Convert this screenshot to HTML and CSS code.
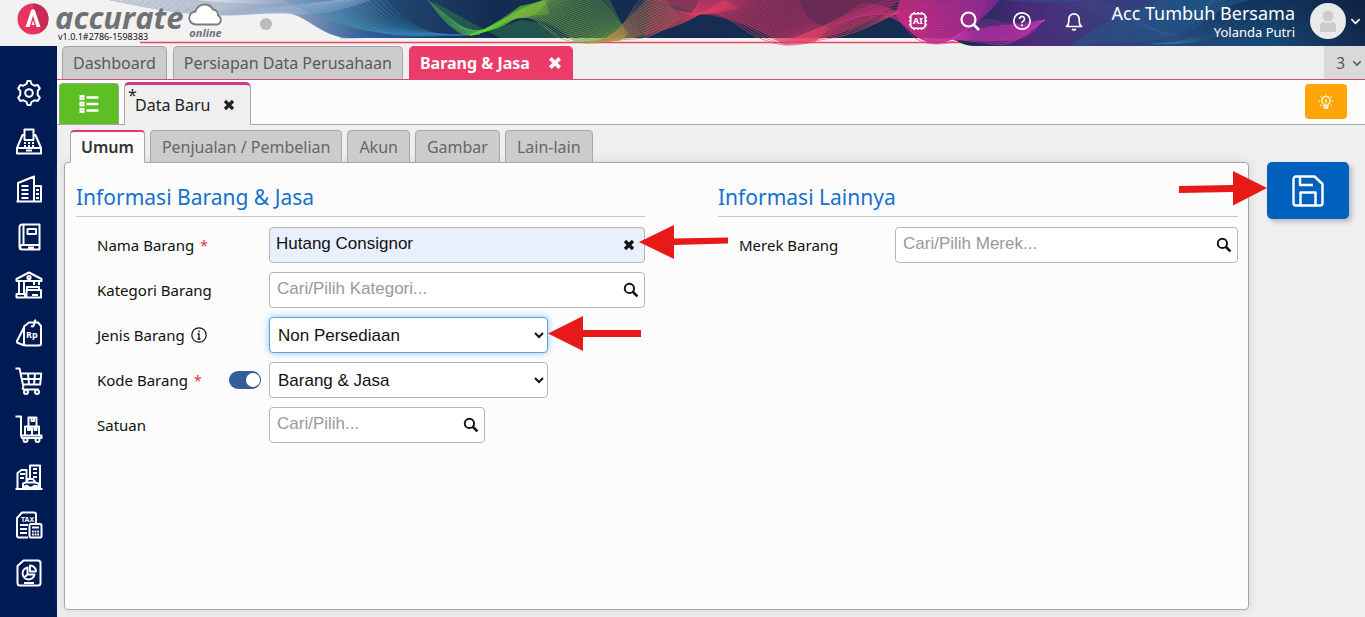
FILE: index.html
```html
<!DOCTYPE html>
<html lang="id">
<head>
<meta charset="utf-8">
<title>Accurate Online - Barang &amp; Jasa</title>
<link rel="stylesheet" href="styles.css">
</head>
<body>
<svg class="sprite" aria-hidden="true">
  <symbol id="i-x" viewBox="0 0 12 12"><path d="M2 2l8 8M10 2l-8 8" fill="none" stroke="currentColor" stroke-width="3.2"/></symbol>
  <symbol id="i-search" viewBox="0 0 20 20"><circle cx="8" cy="8" r="5.8" fill="none" stroke="currentColor" stroke-width="2.4"/><path d="M12.2 12.2L18 18" stroke="currentColor" stroke-width="3.2"/></symbol>
  <symbol id="i-down" viewBox="0 0 12 12"><path d="M1.500 4l4.500 4.500L10.500 4" fill="none" stroke="currentColor" stroke-width="1.800"/></symbol>
</svg>

<header class="header">
  <svg class="banner" viewBox="0 0 1365 46" preserveAspectRatio="none" aria-hidden="true">
    <defs>
      <linearGradient id="navy" x1="0" x2="1365" y1="0" y2="0" gradientUnits="userSpaceOnUse">
        <stop offset=".09" stop-color="#f0f0f0"/><stop offset=".16" stop-color="#d5dbe4"/>
        <stop offset=".21" stop-color="#8fa3c4"/><stop offset=".25" stop-color="#4f74a5"/>
        <stop offset=".29" stop-color="#1f4670"/><stop offset=".36" stop-color="#152c52"/>
        <stop offset=".7" stop-color="#152d50"/><stop offset=".75" stop-color="#4b2878"/>
        <stop offset=".8" stop-color="#3d3a7a"/><stop offset=".86" stop-color="#27467c"/>
        <stop offset=".93" stop-color="#174a78"/><stop offset="1" stop-color="#14294f"/>
      </linearGradient>
      <linearGradient id="fuchsia" x1="0" x2="1"><stop offset="0" stop-color="#d32a80"/><stop offset="1" stop-color="#7b2a9c"/></linearGradient>
      <linearGradient id="shade" x1="0" x2="0" y1="0" y2="1"><stop offset="0" stop-color="#0b1838" stop-opacity=".45"/><stop offset="1" stop-color="#0b1838" stop-opacity="0"/></linearGradient>
    </defs>
    <path d="M140 42.500H966" stroke="#e8455f" stroke-width="1.300"/>
    <path d="M110 0C150 8 190 17 226 15C250 13 262 12 280 12C306 12 320 38 350 38H950C960 42 964 46 974 46H1365V0Z" fill="url(#navy)"/>
    <path d="M430 0Q452 34 472 35Q490 32 520 20Q545 20 560 38L500 38Z" fill="#2f7a48" opacity=".5"/>
    <path d="M472 35Q495 25 520 6L548 0Q535 20 518 18Q500 24 472 35Z" fill="#5cc330" opacity=".7"/>
    <path d="M520 18Q545 16 575 42Q600 46 625 30L610 0H548Z" fill="#4c8a3a" opacity=".4"/>
    <path d="M600 42Q630 20 645 0H700L700 14Q670 34 600 42Z" fill="#8c5a50" opacity=".5"/>
    <path d="M650 0L700 14Q740 18 785 45Q860 36 900 0Z" fill="#b02a5c" opacity=".55"/>
    <path d="M895 14Q915 43 937 44Q965 40 1000 0H900Z" fill="url(#fuchsia)" opacity=".85"/>
    <path d="M950 38Q985 22 1040 24Q1030 42 1000 41Q970 42 950 38Z" fill="#a42a9c" opacity=".75"/>
    <path d="M1000 0Q1060 6 1080 0H1000ZM1140 42Q1190 40 1215 0H1160Q1100 20 1070 46Z" fill="#1b6b91" opacity=".3"/>
    <path d="M1180 46Q1210 8 1250 0H1365V46Z" fill="url(#shade)"/>
    <g id="waves" fill="none" stroke-width=".8"></g>
  </svg>
  <div class="brand">
    <svg class="brand-mark" viewBox="0 0 32 32" aria-hidden="true"><circle cx="16" cy="16" r="15.500" fill="#ea3360"/><path d="M16 .5A15.500 15.500 0 0 1 31.500 16A15.500 15.500 0 0 1 22 30L24 24L16 6Z" fill="#c72a55"/><path d="M8.500 24L14 7.500q2-3 4 0L23.500 24h-4L16 12.500L12.500 24Z" fill="#fff"/><path d="M14.500 22L16 17.500l1.500 4.500Z" fill="#fff"/></svg>
    <div class="brand-text"><span class="brand-name">accurate</span><span class="version">v1.0.1#2786-1598383</span></div>
    <div class="brand-cloud">
      <svg viewBox="0 0 36 24" aria-hidden="true"><path d="M8 21.500a6.500 6.500 0 0 1-.5-13A9.500 9.500 0 0 1 25 6.500a5.500 5.500 0 0 1 5 6a4.700 4.700 0 0 1-1.500 9Z" fill="#fff" stroke="#777b7e" stroke-width="1.800"/></svg>
      <span>online</span>
    </div>
    <span class="status-dot"></span>
  </div>
  <nav class="header-tools" aria-label="Alat">
    <button class="tool" aria-label="AI"><svg viewBox="0 0 22 22"><rect x="3" y="3" width="16" height="16" rx="3.500" fill="none" stroke="#fff" stroke-width="1.800"/><path d="M7 1v2M11 1v2M15 1v2M7 19v2M11 19v2M15 19v2M1 7h2M1 11h2M1 15h2M19 7h2M19 11h2M19 15h2" stroke="#fff" stroke-width="1.800"/><text x="11" y="14.500" text-anchor="middle" class="ai-text">AI</text></svg></button>
    <button class="tool" aria-label="Cari"><svg viewBox="0 0 20 20"><circle cx="8.500" cy="8.500" r="7" fill="none" stroke="#fff" stroke-width="2.200"/><path d="M13.500 13.500l5.500 5.500" stroke="#fff" stroke-width="2.600"/></svg></button>
    <button class="tool" aria-label="Bantuan"><svg viewBox="0 0 20 20" fill="none" stroke="#fff"><circle cx="10" cy="10" r="8.200" stroke-width="1.700"/><path d="M7.500 8a2.500 2.500 0 1 1 3.800 2.100c-.9.500-1.300.9-1.300 1.900" stroke-width="1.700"/><path d="M10 13.400v1.900" stroke-width="1.900"/></svg></button>
    <button class="tool" aria-label="Notifikasi"><svg viewBox="0 0 20 20" fill="none" stroke="#fff" stroke-width="1.700" stroke-linejoin="round"><path d="M2.500 15.500h15c-1.900-1.500-2.300-3-2.300-5V8a5.200 5.200 0 0 0-10.400 0v2.500c0 2-.4 3.500-2.300 5Z"/><path d="M8 18.300q2 1.200 4 0"/></svg></button>
  </nav>
  <div class="account"><span class="company">Acc Tumbuh Bersama</span><span class="user">Yolanda Putri</span></div>
  <button class="avatar" aria-label="Akun pengguna">
    <svg class="avatar-pic" viewBox="0 0 36 36"><circle cx="18" cy="18" r="18" fill="#e9eaeb"/><circle cx="18" cy="13" r="5.500" fill="#ccc"/><path d="M10 28v-5q0-4 4-4q4 2.500 8 0q4 0 4 4v5q0 1-1 1H11q-1 0-1-1Z" fill="#ccc"/></svg>
    <svg class="avatar-caret"><use href="#i-down"/></svg>
  </button>
</header>

<div class="shell">
  <nav class="sidebar" aria-label="Menu utama">
    <a href="#" aria-label="Pengaturan"><svg viewBox="0 0 28 28"><path d="M11.500 5l1-3h3l1 3l3 1.700l3.200-.7l2.100 3.400L22.700 12v4l2.100 2.600l-2.100 3.400l-3.200-.7l-3 1.700l-1 3h-3l-1-3l-3-1.700l-3.200.7l-2.100-3.400L5.300 16v-4L3.200 9.400L5.300 6l3.200.7Z"/><circle cx="14" cy="14" r="3.800"/></svg></a>
    <a href="#" aria-label="Kasir"><svg viewBox="0 0 28 28"><path d="M9.500 8H7.500L2 21h24L20.500 8H18.500M9.500 13V2.500h9V13M9 13h10M2 21v5.500h24V21M11 23.500h6"/><path d="M9 16h10M9 19h10" stroke-dasharray="2 2"/></svg></a>
    <a href="#" aria-label="Perusahaan"><svg viewBox="0 0 28 28"><path d="M1.500 26.500h25M3 26.500V8l16-6.500v25M19 11h7v15.500M6.500 11h7M6.500 15h7M6.500 19h7M6.500 23h7M21 15h3M21 19h3M21 23h3"/></svg></a>
    <a href="#" aria-label="Buku besar"><svg viewBox="0 0 28 28"><path d="M7 1.500h17.500v25H7A2.500 2.500 0 0 1 4.500 24V4A2.500 2.500 0 0 1 7 1.500ZM8.500 2v20M24 22H7a2.300 2.300 0 0 0 0 4.500M12.500 6h8.500v5h-8.500ZM13 24.500h6"/></svg></a>
    <a href="#" aria-label="Kas dan bank"><svg viewBox="0 0 28 28"><path d="M1.500 10V8L14 1.500L26.500 8v2ZM4 10v12M9 10v12M1.500 26.500V23H10v3.500ZM19 10v4M24 10v4M12 20v-4h12v2.500M11.500 19H26v7.500H11.500ZM17 24h6"/><circle cx="14" cy="6.500" r="1.600"/></svg></a>
    <a href="#" aria-label="Penjualan"><svg viewBox="0 0 28 28"><path d="M9 7.500l5-4h9l3 3.500v17.500q0 2-2 2H11q-2 0-2-2ZM9 8.500L2 22q-.5 1.500 1 2l6.500 2.500M16 7q2 1 3-1q0-4 2-5"/><text x="11" y="19" class="rp-text">Rp</text></svg></a>
    <a href="#" aria-label="Pembelian"><svg viewBox="0 0 28 28"><path d="M.5 1.500h4L8.500 20M5.700 6.500h20.500l-1 11H8M7 12h18.500M13 6.500l1 11M20 6.500l-1 11M8.500 20q-2 2 .5 2.500h15"/><circle cx="11" cy="25" r="2"/><circle cx="22" cy="25" r="2"/></svg></a>
    <a href="#" aria-label="Persediaan"><svg viewBox="0 0 28 28"><path d="M.5 1.500h5.500V20M6 20.500h20.500v2.500H7ZM10 20v-8.500h7V20M17 20v-8.500h7V20M13.500 11.500v-9h8v9M16.500 3v3h2.500V3M13 12v3h2v-3M19.500 12v3h2v-3"/><circle cx="10.500" cy="25" r="2"/><circle cx="22.500" cy="25" r="2"/></svg></a>
    <a href="#" aria-label="Aset tetap"><svg viewBox="0 0 28 28"><path d="M.5 26h27M2.500 26V10l4-3h5v12M15 16V2.500h10V26M18 6h4M18 10h4M18 14h4M5 11h5M5 15h4M8 24.500v-4l3-1l2-3.500h5l2.500 3.500l3 1v4ZM12 19.500h8"/><circle cx="11.500" cy="24.500" r="1.800"/><circle cx="20" cy="24.500" r="1.800"/></svg></a>
    <a href="#" aria-label="Pajak"><svg viewBox="0 0 28 28"><path d="M13 26.500H4a2 2 0 0 1-2-2V7l5-5.500h12a2 2 0 0 1 2 2V12M5 14h8M5 18h7M5 22h7M16 13h9q1.500 0 1.500 1.500v10.500q0 1.500-1.500 1.500h-9q-1.500 0-1.500-1.500V14.500Q14.500 13 16 13ZM17 16.500h7"/><path d="M17 20.500h7M17 23.500h7" stroke-dasharray="1.800 .8"/><text x="6" y="11" class="tax-text">TAX</text></svg></a>
    <a href="#" aria-label="Laporan"><svg viewBox="0 0 28 28"><path d="M8.500 1.500H23a2.500 2.500 0 0 1 2.500 2.500v20a2.500 2.500 0 0 1-2.500 2.500H5A2.500 2.500 0 0 1 2.500 24V7ZM12.500 8.500a6 6 0 1 0 7 7h-7ZM15 6.500v6h6a6 6 0 0 0-6-6ZM12.500 15.500l-4 3.500M9 24h10"/></svg></a>
  </nav>

  <main class="main">
    <div class="module-tabs" role="tablist">
      <button class="tab" role="tab">Dashboard</button>
      <button class="tab" role="tab">Persiapan Data Perusahaan</button>
      <button class="tab tab-current" role="tab" aria-selected="true">Barang &amp; Jasa <svg class="x-large"><use href="#i-x"/></svg></button>
      <button class="tab-count">3 <svg class="caret"><use href="#i-down"/></svg></button>
    </div>

    <div class="record-bar">
      <button class="list-button" aria-label="Daftar"><svg viewBox="0 0 20 20" fill="none" stroke="#fff"><path d="M1.500 2h3v3h-3ZM1.500 8.500h3v3h-3ZM1.500 15h3v3h-3Z" stroke-width="2"/><path d="M7.500 3.500h12M7.500 10h12M7.500 16.500h12" stroke-width="2.400"/></svg></button>
      <button class="record-tab"><span class="unsaved">*</span>Data Baru <svg class="x-medium"><use href="#i-x"/></svg></button>
      <button class="tip-button" aria-label="Tips"><svg viewBox="0 0 18 18" fill="none" stroke="#fff" stroke-width="1.300"><path d="M6.500 12.500q0-1.300-1.300-2.500a4.600 4.600 0 1 1 7.600 0q-1.300 1.200-1.300 2.500Z"/><path d="M7 14.500h4v1.500H7ZM9 5.500v5"/><path d="M9 .3v1.300M2.800 2.600l1 1M15.200 2.600l-1 1M.8 8h1.400M15.800 8h1.400M2.500 13.200l1-1M15.500 13.200l-1-1"/></svg></button>
    </div>

    <div class="workspace">
      <section class="editor">
        <div class="section-tabs" role="tablist">
          <button class="section-tab section-tab-current" role="tab" aria-selected="true">Umum</button>
          <button class="section-tab" role="tab">Penjualan / Pembelian</button>
          <button class="section-tab" role="tab">Akun</button>
          <button class="section-tab" role="tab">Gambar</button>
          <button class="section-tab" role="tab">Lain-lain</button>
        </div>
        <form class="panel">
          <section class="group">
            <h2>Informasi Barang &amp; Jasa</h2>
            <div class="field">
              <label for="nama">Nama Barang <span class="required">*</span></label>
              <div class="control">
                <input id="nama" class="filled" type="text" value="Hutang Consignor">
                <button type="button" class="clear" aria-label="Hapus"><svg><use href="#i-x"/></svg></button>
                <svg class="arrow arrow-name" viewBox="0 0 90 36" aria-hidden="true"><path d="M1 18L36 1v13.500L90 13.500v6L36 21v14Z"/></svg>
              </div>
            </div>
            <div class="field">
              <label for="kategori">Kategori Barang</label>
              <div class="control">
                <input id="kategori" type="text" placeholder="Cari/Pilih Kategori...">
                <button type="button" class="lookup" aria-label="Cari kategori"><svg><use href="#i-search"/></svg></button>
              </div>
            </div>
            <div class="field">
              <label for="jenis">Jenis Barang <svg class="info" viewBox="0 0 16 16" fill="none" stroke="currentColor"><circle cx="8" cy="8" r="7.200" stroke-width="1.200"/><path d="M6.500 7H8v5M6.500 12h3M8 3.500v1.800" stroke-width="1.300"/></svg></label>
              <div class="control control-select">
                <select id="jenis" class="active"><option>Non Persediaan</option></select>
                <svg class="arrow arrow-type" viewBox="0 0 94 36" aria-hidden="true"><path d="M0 17.500L35 0v14h58v7H35v14Z"/></svg>
              </div>
            </div>
            <div class="field">
              <label for="kode">Kode Barang <span class="required">*</span></label>
              <input class="switch" type="checkbox" checked aria-label="Kode otomatis">
              <div class="control control-select">
                <select id="kode"><option>Barang &amp; Jasa</option></select>
              </div>
            </div>
            <div class="field">
              <label for="satuan">Satuan</label>
              <div class="control control-unit">
                <input id="satuan" type="text" placeholder="Cari/Pilih...">
                <button type="button" class="lookup" aria-label="Cari satuan"><svg><use href="#i-search"/></svg></button>
              </div>
            </div>
          </section>
          <section class="group group-other">
            <h2>Informasi Lainnya</h2>
            <div class="field">
              <label for="merek">Merek Barang</label>
              <div class="control">
                <input id="merek" type="text" placeholder="Cari/Pilih Merek...">
                <button type="button" class="lookup" aria-label="Cari merek"><svg><use href="#i-search"/></svg></button>
              </div>
            </div>
          </section>
        </form>
      </section>
      <aside class="actions">
        <button class="save" aria-label="Simpan"><svg viewBox="0 0 32 32" fill="none" stroke="#fff" stroke-width="2.400" stroke-linejoin="round"><path d="M4 1.500h18.500L30.500 9v19a2.500 2.500 0 0 1-2.500 2.500H4A2.500 2.500 0 0 1 1.500 28V4A2.500 2.500 0 0 1 4 1.500ZM8 2v8h13M8.500 30V17.500h15V30"/></svg></button>
        <svg class="arrow arrow-save" viewBox="0 0 90 36" aria-hidden="true"><path d="M90 17L56 0v14L2 15v7l54-1v13.500Z"/></svg>
      </aside>
    </div>
  </main>
</div>
<script src="waves.js"></script>
</body>
</html>
```
FILE: waves.js
```js
// Each ribbon is a set of lines blended from one edge curve to the other.
const ribbons = [
  { c: "#8d9cb8", n: 14, a: [110,0, 170,11, 226,15, 280,12], b: [190,0, 230,3, 280,4, 340,0] },
  { c: "#9fb6d8", n: 12, a: [226,15, 260,9, 310,4, 340,0], b: [280,12, 310,14, 345,8, 370,0] },
  { c: "#3f9db5", n: 18, a: [285,0, 330,20, 390,34, 460,35], b: [385,0, 405,19, 430,32, 460,35] },
  { c: "#2b69b5", n: 9, a: [340,38, 390,37, 430,36, 480,34], b: [390,18, 415,30, 445,35, 480,34] },
  { c: "#4fae50", n: 18, a: [428,0, 448,24, 470,35, 500,21, 520,13], b: [470,35, 478,32, 490,28, 505,22, 520,13] },
  { c: "#66d52f", n: 14, a: [470,35, 495,25, 520,10, 545,0], b: [472,35, 500,27, 520,17, 550,14] },
  { c: "#7fae45", n: 26, a: [500,22, 530,18, 560,38, 590,43, 620,40], b: [535,3, 560,-4, 590,-5, 610,10, 628,34] },
  { c: "#c08a4a", n: 16, a: [585,43, 620,40, 650,36, 680,18], b: [600,42, 620,28, 640,0, 660,-8] },
  { c: "#d33a63", n: 18, a: [645,36, 680,24, 704,12, 725,0], b: [650,0, 670,8, 700,14, 740,8] },
  { c: "#e23f68", n: 24, a: [690,15, 720,15, 755,36, 785,45, 815,42], b: [700,0, 750,-8, 790,-5, 810,20, 830,28] },
  { c: "#f0466a", n: 14, a: [780,43, 820,40, 855,32, 895,14], b: [815,30, 840,18, 865,4, 900,12] },
  { c: "#c42e79", n: 16, a: [830,28, 860,10, 890,0, 920,-5], b: [880,6, 900,18, 920,38, 955,42] },
  { c: "#e12b91", n: 18, a: [895,14, 915,38, 940,44, 970,36], b: [930,0, 940,5, 960,0, 990,-4] },
  { c: "#c837ad", n: 14, a: [950,39, 980,42, 1010,43, 1045,20], b: [955,36, 985,20, 1010,24, 1045,20] },
  { c: "#5058a8", n: 8, o: 0.35, a: [1030,28, 1065,0, 1120,8, 1170,44], b: [1060,40, 1080,10, 1110,20, 1200,40] },
  { c: "#2b86a0", n: 10, o: 0.35, a: [1150,44, 1190,38, 1195,14, 1215,0], b: [1165,44, 1205,40, 1240,20, 1225,0] }
];

function smoothPath(p) {
  let d = `M${p[0]} ${p[1]}`;
  const last = p.length - 2;
  const at = (i, k) => p[Math.max(0, Math.min(last, i)) + k];
  for (let i = 0; i < last; i += 2) {
    d += `C${at(i, 0) + (at(i + 2, 0) - at(i - 2, 0)) / 6} ${at(i, 1) + (at(i + 2, 1) - at(i - 2, 1)) / 6}`
      + ` ${at(i + 2, 0) - (at(i + 4, 0) - at(i, 0)) / 6} ${at(i + 2, 1) - (at(i + 4, 1) - at(i, 1)) / 6}`
      + ` ${at(i + 2, 0)} ${at(i + 2, 1)}`;
  }
  return d;
}

const waves = document.getElementById("waves");
for (const r of ribbons) {
  for (let i = 0; i < r.n; i++) {
    const t = i / (r.n - 1);
    const path = document.createElementNS("http://www.w3.org/2000/svg", "path");
    path.setAttribute("d", smoothPath(r.a.map((v, k) => v + (r.b[k] - v) * t)));
    path.setAttribute("stroke", r.c);
    path.setAttribute("opacity", (r.o || 0.8) * (1 - t * 0.4));
    waves.appendChild(path);
  }
}
```
FILE: styles.css
```css
* { box-sizing: border-box; }
html, body { height: 100%; }
body {
  margin: 0;
  display: flex;
  flex-direction: column;
  background: #efefef;
  color: #111;
  font-family: "Noto Sans", "Open Sans", sans-serif;
  font-size: 16px;
}
button { font: inherit; color: inherit; border: 0; background: none; padding: 0; }
svg { display: block; flex: none; }
.sprite { position: absolute; width: 0; height: 0; }

/* Header */
.header { position: relative; height: 46px; flex: none; display: flex; align-items: center; background: #f2f2f2; }
.banner { position: absolute; left: 0; top: 0; width: 100%; height: 46px; }
.header > :not(.banner) { position: relative; }
.brand { display: flex; align-items: flex-start; height: 46px; padding: 3px 0 0 17px; }
.brand-mark { width: 32px; height: 32px; }
.brand-text { display: flex; flex-direction: column; margin-left: 6px; color: #6f7174; }
.brand-name { font: italic 700 31px/28px "Open Sans", sans-serif; }
.version { font-size: 9px; line-height: 12px; color: #111; padding-left: 3px; }
.brand-cloud { display: flex; flex-direction: column; align-items: center; margin-left: 4px; font: italic 700 11px/12px "Open Sans", sans-serif; color: #6f7174; }
.brand-cloud svg { width: 36px; height: 24px; }
.status-dot { width: 12px; height: 12px; border-radius: 50%; background: #bcbcbc; margin: 15px 0 0 36px; }
.header-tools { display: flex; gap: 30px; margin-left: auto; padding-bottom: 4px; }
.tool { width: 22px; height: 22px; display: grid; place-items: center; }
.tool svg { width: 20px; height: 20px; }
.ai-text { font: 700 10px "Noto Sans", sans-serif; fill: #fff; }
.account { display: flex; flex-direction: column; align-items: flex-end; margin-left: 27px; color: #fff; padding-bottom: 4px; }
.company { font-size: 18px; line-height: 22px; }
.user { font-size: 13px; line-height: 16px; }
.avatar { display: flex; align-items: center; gap: 4px; margin: 0 4px 4px 15px; color: #fff; }
.avatar-pic { width: 36px; height: 36px; }
.avatar-caret { width: 11px; height: 12px; }

/* Shell */
.shell { flex: 1; display: flex; min-height: 0; }
.sidebar { width: 57px; flex: none; padding-top: 23px; background: #001a54; display: flex; flex-direction: column; }
.sidebar a { height: 48px; flex: none; display: grid; place-items: center; }
.sidebar svg { width: 28px; height: 28px; fill: none; stroke: #fff; stroke-width: 2; stroke-linejoin: round; }
.sidebar text { fill: #fff; stroke: none; }
.rp-text { font: 700 9px "Noto Sans", sans-serif; }
.tax-text { font: 700 7px "Noto Sans", sans-serif; }
.main { flex: 1; min-width: 0; display: flex; flex-direction: column; }

/* Module tabs */
.module-tabs { display: flex; gap: 6px; height: 34px; flex: none; padding-left: 5px; border-bottom: 1px solid #cf4a7c; }
.tab { padding: 0 10px; border: 1px solid #a3a3a3; border-bottom: 0; border-radius: 5px 5px 0 0; background: #ccc; color: #58595b; white-space: nowrap; }
.tab-current { display: flex; align-items: center; gap: 18px; border-color: #ec3a69; background: #ec3a69; color: #fff; font-weight: 700; }
.x-large { width: 14px; height: 14px; }
.tab-count { width: 41px; margin-left: auto; padding-left: 12px; display: flex; align-items: center; gap: 7px; background: #d9d9d9; color: #58595b; }
.caret { width: 10px; height: 12px; }

/* Record bar */
.record-bar { display: flex; height: 45px; flex: none; padding: 2px 18px 0 2px; background: #fcfcfc; border-bottom: 1px solid #a7a7a7; }
.list-button { width: 60px; margin-top: 1px; display: grid; place-items: center; border: 1px solid #8fa982; border-bottom: 0; border-radius: 4px 4px 0 0; background: #5ebf25; }
.list-button svg { width: 20px; height: 20px; }
.record-tab { position: relative; display: flex; align-items: center; gap: 13px; margin: 0 0 -1px 5px; padding: 0 15px 0 10px; border: 1px solid #a7a7a7; border-top: 3px solid #d63a90; border-bottom: 0; border-radius: 5px 5px 0 0; background: #efefef; color: #222; }
.unsaved { position: absolute; left: 3px; top: 0; line-height: 20px; }
.x-medium { width: 12px; height: 12px; }
.tip-button { width: 42px; height: 35px; margin: 2px 0 0 auto; display: grid; place-items: center; border-radius: 4px; background: #ffa507; }
.tip-button svg { width: 16px; height: 16px; }

/* Editor */
.workspace { flex: 1; display: flex; padding: 5px 16px 7px 7px; }
.editor { flex: 1; min-width: 0; display: flex; flex-direction: column; }
.section-tabs { display: flex; gap: 5px; padding-left: 6px; height: 33px; margin-bottom: -1px; z-index: 1; }
.section-tab { height: 33px; padding: 0 11px; border: 1px solid #a7a7a7; border-radius: 4px 4px 0 0; background: #ccc; color: #666; white-space: nowrap; }
.section-tab-current { padding: 0 10px; border-top: 2px solid #e43a6b; border-bottom-color: #fcfcfc; background: #fcfcfc; color: #333; font-weight: 600; }
.panel { flex: 1; display: grid; grid-template-columns: 569fr 520fr; column-gap: 73px; align-content: start; padding: 20px 10px 20px 11px; border: 1px solid #a7a7a7; border-radius: 4px; background: #fcfcfc; box-shadow: 0 0 10px #d4d4d4; }
.group { display: flex; flex-direction: column; gap: 9px; }
.group h2 { margin: 0 0 1px; padding-bottom: 4px; font-size: 21px; font-weight: 400; line-height: 29px; color: #1570cd; border-bottom: 1px solid #c8c8c8; }
.field { position: relative; display: flex; align-items: center; padding-left: 21px; }
.field label { width: 172px; flex: none; display: flex; align-items: center; gap: 6px; font-size: 15px; }
.group-other .field label { width: 156px; }
.required { color: #e8303a; font-size: 14px; }
.info { width: 16px; height: 16px; }
.control { position: relative; flex: 1; display: flex; }
.control-select { flex: 0 0 279px; }
.control-unit { flex: 0 0 216px; }
.control input, .control select { width: 100%; height: 36px; border: 1px solid #b5b5b5; border-radius: 4px; background: #fff; color: #111; font: 17px "Liberation Sans", Arial, sans-serif; }
.control input { padding: 0 34px 2px 7px; }
.control select { padding: 0 7px 0 4px; }
.control .filled { padding-left: 6px; background: #e8effd; }
.control .active { border-color: #5aa5dd; box-shadow: 0 0 7px #8cc5ee; }
.control input::placeholder { color: #999; opacity: 1; }
.clear, .lookup { position: absolute; top: 0; bottom: 0; display: grid; place-items: center; }
.clear { right: 10px; width: 12px; }
.clear svg { width: 12px; height: 12px; }
.lookup { right: 6px; width: 16px; }
.lookup svg { width: 16px; height: 16px; }
.switch { appearance: none; position: absolute; left: 153px; width: 32px; height: 18px; margin: 0; border-radius: 9px; background: #355d99; }
.switch::after { content: ""; position: absolute; right: 1px; top: 2px; width: 14px; height: 14px; border-radius: 50%; background: #fff; }

/* Save action */
.actions { position: relative; width: 82px; flex: none; margin-left: 18px; padding-top: 32px; }
.save { width: 82px; height: 57px; display: grid; place-items: center; border-radius: 5px; background: #0060bd; box-shadow: 3px 3px 5px #bbb; }
.save svg { width: 32px; height: 32px; }

/* Callout arrows */
.arrow { position: absolute; fill: #e71919; z-index: 2; }
.arrow-name { left: 100%; top: -3px; width: 90px; height: 36px; margin-left: -7px; }
.arrow-type { left: 100%; top: -1px; width: 94px; height: 36px; }
.arrow-save { right: 100%; top: 41px; width: 90px; height: 36px; }
```
